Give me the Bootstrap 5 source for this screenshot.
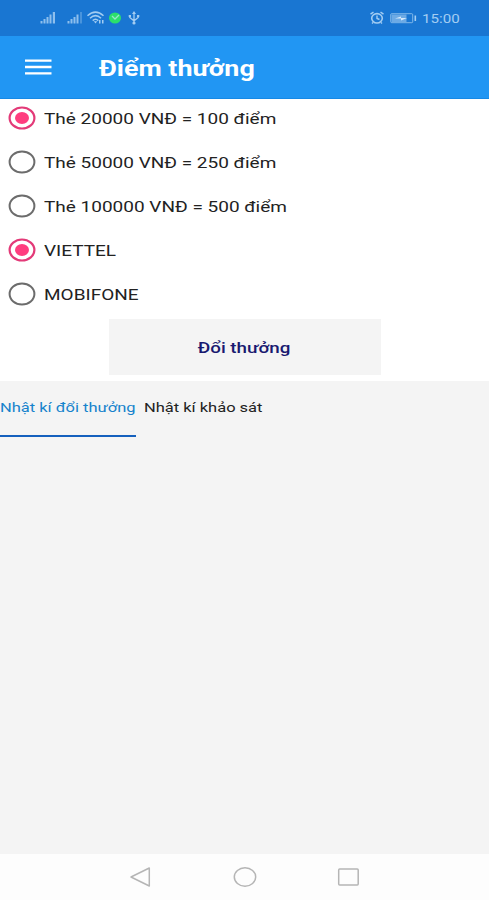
<!DOCTYPE html>
<html lang="vi">
<head>
<meta charset="utf-8">
<meta name="viewport" content="width=device-width, initial-scale=1">
<title>Điểm thưởng</title>
<link href="https://cdn.jsdelivr.net/npm/bootstrap@5.3.0/dist/css/bootstrap.min.css" rel="stylesheet">
<style>
body{font-family:Roboto,"Liberation Sans",sans-serif;background:#f4f4f4;color:#222;overflow:hidden}
.wide{display:inline-block;white-space:nowrap;transform:scaleX(1.22);transform-origin:left center}
.statusbar{height:36px;background:#1976d2;color:#a3cdf2;padding-left:40px;padding-right:29px}
.clock{font-size:13.5px;line-height:36px;width:38px}
.clock .wide{transform:scaleX(1.12)}
.appbar{height:63px;background:#2196f3;padding-left:25px;border-bottom:1px solid #1689e6}
.apptitle{font-size:22px;font-weight:700;line-height:61px;padding-top:2px;margin-left:46.500px}
.options{gap:6px;padding-bottom:6px}
.option{height:38px;padding-left:8px;font-size:15px;gap:8px}
.option .wide{transform:scaleX(1.266);padding-top:2px}
.redeem{width:272px;height:56px;background:#f4f4f4;color:#191970;font-size:15px;font-weight:500;border-radius:0}
.redeem .wide{transform:scaleX(1.25);transform-origin:center;padding-top:2px}
.log-tabs{height:56px;font-size:13.5px;gap:8px}
.log-tab{height:56px;width:136px;padding:0 0 2px;border-bottom:2px solid transparent;color:#222}
.log-tab.active{color:#1683cc;border-color:#1560bd}
.sysbar{height:46px;background:#fdfdfd}
</style>
<script src="https://cdn.jsdelivr.net/npm/bootstrap@5.3.0/dist/js/bootstrap.bundle.min.js"></script>
</head>
<body>
<div class="d-flex flex-column vh-100">
  <div class="statusbar d-flex align-items-center justify-content-between">
    <svg width="102" height="18" viewBox="40 9 102 18" fill="#a3cdf2">
      <path d="M40.500 21h2v2.500h-2zM43.500 19h2v4.500h-2zM46.500 17h2v6.500h-2zM49.500 14.500h2v9h-2zM52.800 12h2.200v11.500h-2.200z" opacity=".85"/>
      <path d="M67.500 21h2v2.500h-2zM70.500 19h2v4.500h-2zM73.500 17h2v6.500h-2zM76.500 14.500h2v9h-2z" opacity=".85"/>
      <path d="M80 12h2v11.500h-2z" opacity=".35"/>
      <g fill="none" stroke="#a3cdf2" stroke-width="1.500"><path d="M87.500 15.800Q95.500 8.500 103.500 15.800M90 18.300Q95.500 13 101 18.300M92.700 20.600Q95.500 18 98.300 20.600"/></g>
      <path d="M93.800 21.300h3.400l-1.700 2.200zM99 20h1.500v3.500H99zM102 20h1.500v3.500H102z"/>
      <ellipse cx="115" cy="18" rx="6" ry="5.500" fill="#2be06c"/><path d="M112 16l3 3 4-4" fill="none" stroke="#96e8c8" stroke-width="1.300"/>
      <g fill="none" stroke="#a3cdf2" stroke-width="1.300"><path d="M134 13.500v9M129.800 16v1.500l4.200 3.300 4.200-3.300V16"/></g>
      <path d="M134 11l2 3h-4zM128.700 15h2.300v2h-2.300zM137 15h2.300v2H137z"/><circle cx="134" cy="23" r="1.600"/>
    </svg>
    <div class="d-flex align-items-center">
      <svg width="52" height="18" viewBox="370 9 52 18" fill="none" stroke="#a3cdf2">
        <ellipse cx="377" cy="18.300" rx="5.300" ry="4.700" stroke-width="1.600"/><path d="M370.500 14.200l3-2M383.500 14.200l-3-2M377 15.500v3l2.500 1M373 22.500l-1 1M381 22.500l1 1" stroke-width="1.400"/>
        <rect x="390.700" y="13.700" width="22" height="9" rx="1" stroke-width="1" opacity=".75"/><path d="M391.500 14.500h15v7.500h-15z" fill="#a3cdf2" stroke="none" opacity=".6"/><path d="M395 18.500l6-2v1.500h6l-6 2.500v-2z" fill="#d5e9fb" stroke="none"/><path d="M415.300 15.500v5.500" stroke-width="1.600"/>
      </svg>
      <span class="clock"><span class="wide">15:00</span></span>
    </div>
  </div>

  <header class="appbar d-flex align-items-center text-white">
    <svg width="27" height="16" viewBox="0 0 27 16" stroke="#fff" stroke-width="2.300"><path d="M0 1.700h26.500M0 8h26.500M0 14.300h26.500"/></svg>
    <span class="apptitle"><span class="wide">Điểm thưởng</span></span>
  </header>

  <main class="flex-grow-1">
    <section class="options bg-white d-flex flex-column">
      <div class="option d-flex align-items-center"><svg width="28" height="24" viewBox="0 0 28 24"><ellipse cx="14" cy="12" rx="12.400" ry="10.500" fill="none" stroke="#e33a78" stroke-width="2.200"/><ellipse cx="14" cy="12" rx="7" ry="6" fill="#ff3d7f"/></svg><span class="wide">Thẻ 20000 VNĐ = 100 điểm</span></div>
      <div class="option d-flex align-items-center"><svg width="28" height="24" viewBox="0 0 28 24"><ellipse cx="14" cy="12" rx="12.400" ry="10.500" fill="none" stroke="#6c6c6c" stroke-width="2"/></svg><span class="wide">Thẻ 50000 VNĐ = 250 điểm</span></div>
      <div class="option d-flex align-items-center"><svg width="28" height="24" viewBox="0 0 28 24"><ellipse cx="14" cy="12" rx="12.400" ry="10.500" fill="none" stroke="#6c6c6c" stroke-width="2"/></svg><span class="wide">Thẻ 100000 VNĐ = 500 điểm</span></div>
      <div class="option d-flex align-items-center"><svg width="28" height="24" viewBox="0 0 28 24"><ellipse cx="14" cy="12" rx="12.400" ry="10.500" fill="none" stroke="#e33a78" stroke-width="2.200"/><ellipse cx="14" cy="12" rx="7" ry="6" fill="#ff3d7f"/></svg><span class="wide">VIETTEL</span></div>
      <div class="option d-flex align-items-center"><svg width="28" height="24" viewBox="0 0 28 24"><ellipse cx="14" cy="12" rx="12.400" ry="10.500" fill="none" stroke="#6c6c6c" stroke-width="2"/></svg><span class="wide">MOBIFONE</span></div>
      <button type="button" class="btn redeem mx-auto p-0 border-0"><span class="wide">Đổi thưởng</span></button>
    </section>
    <nav class="log-tabs d-flex">
      <a class="log-tab active d-flex align-items-center text-decoration-none" href="#"><span class="wide">Nhật kí đổi thưởng</span></a>
      <a class="log-tab d-flex align-items-center text-decoration-none" href="#"><span class="wide">Nhật kí khảo sát</span></a>
    </nav>
  </main>

  <footer class="sysbar d-flex align-items-center justify-content-center">
    <svg width="231" height="24" viewBox="129 865 231 24" fill="none" stroke="#b5b5b5" stroke-width="1.500" stroke-linejoin="round"><path d="M149.300 868v18L131 877z"/><ellipse cx="245" cy="877" rx="10.700" ry="9.200"/><rect x="338.700" y="869" width="19.500" height="16" rx="1"/></svg>
  </footer>
</div>
</body>
</html>
